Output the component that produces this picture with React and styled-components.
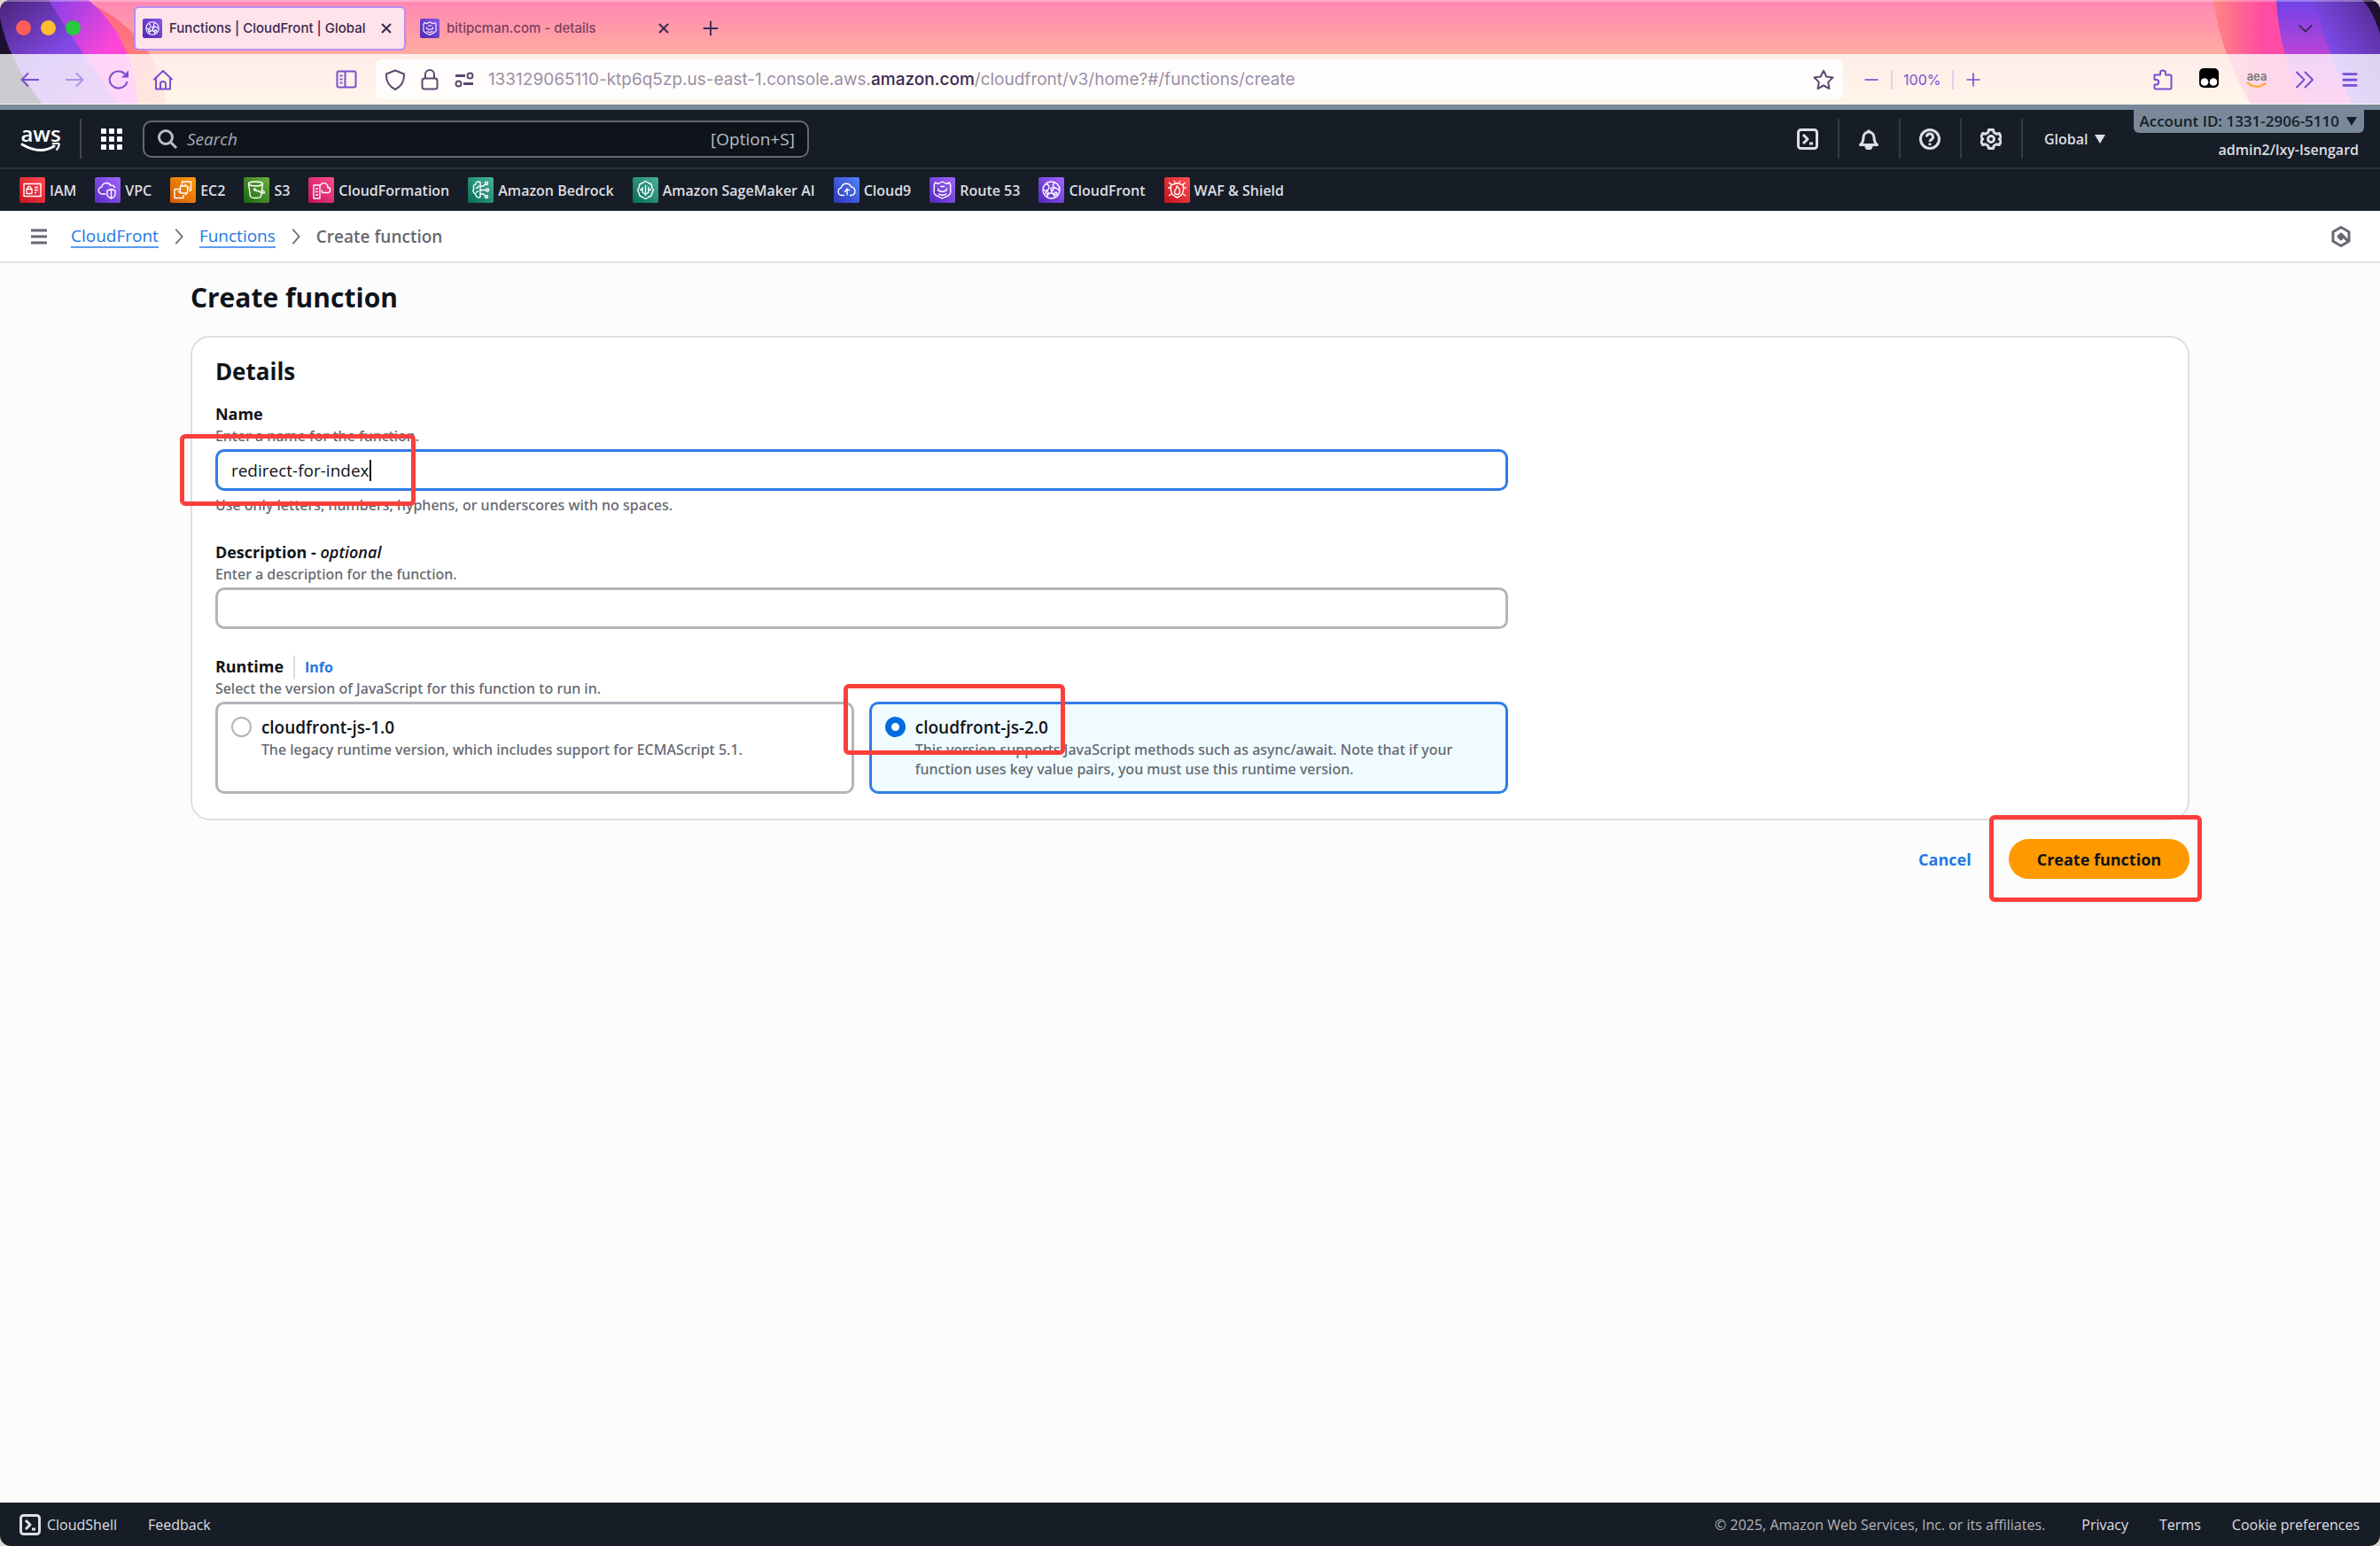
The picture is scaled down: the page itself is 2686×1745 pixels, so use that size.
import React, { useState } from "react";
import styled, { createGlobalStyle, css } from "styled-components";

const FAVORITES = [
  { name: "IAM", from: "#c9101f", to: "#ff4b55", icon: "iam" },
  { name: "VPC", from: "#5a2bc4", to: "#a166ff", icon: "vpc" },
  { name: "EC2", from: "#d35808", to: "#ff9d0a", icon: "ec2" },
  { name: "S3", from: "#1b660f", to: "#6cae3e", icon: "s3" },
  { name: "CloudFormation", from: "#c4105f", to: "#ff4f8b", icon: "formation" },
  { name: "Amazon Bedrock", from: "#066b59", to: "#4ab29a", icon: "bedrock" },
  { name: "Amazon SageMaker AI", from: "#066b59", to: "#4ab29a", icon: "sagemaker" },
  { name: "Cloud9", from: "#2e35bd", to: "#5282f8", icon: "cloud9" },
  { name: "Route 53", from: "#5226b8", to: "#a166ff", icon: "route53" },
  { name: "CloudFront", from: "#5226b8", to: "#a166ff", icon: "cloudfront" },
  { name: "WAF & Shield", from: "#c3101f", to: "#ff5252", icon: "waf" },
];

const SERVICE_PATHS = {
  iam: (
    <>
      <path d="M5 7.5h19v14H5z" />
      <path d="M8 13.5h6v5H8zM9.2 13.5v-1.3a1.8 1.8 0 0 1 3.6 0v1.3M17 11.5h4M17 14.5h4M17 17.5h2" />
    </>
  ),
  vpc: (
    <>
      <path d="M12.5 19H8.5a4 4 0 0 1-.6-8 5.2 5.2 0 0 1 9.8-1.6 3.6 3.6 0 0 1 5 3" />
      <path d="M18.5 13.5l4.5 1.6v4c0 2.5-2 4-4.5 5-2.5-1-4.5-2.5-4.5-5v-4zM18.5 13.5v10.5" />
    </>
  ),
  ec2: (
    <path d="M11.5 10h8v8h-8zM8.5 13.5H5v10h10V20M13.5 7.5V5h10v10H21M13.5 7.5V10M17 7.5V10M19.5 12H22M8.5 13.5h3M8.5 16.5h3M17.5 18v2.5" />
  ),
  s3: (
    <>
      <ellipse cx="13.5" cy="7.5" rx="8" ry="2.5" />
      <path d="M5.5 7.5l2 14c.5 1.3 3 2 6 2s5.5-.7 6-2l2-14M13 14.5l9 3.5c1.5.3 2-.8.8-2l-2-1.7" />
      <circle cx="12.5" cy="14" r="1" />
    </>
  ),
  formation: (
    <>
      <path d="M6 9h7v15H6zM8 13h3M8 16.5h3M8 20h3" />
      <path d="M15.5 17.5h6a3 3 0 0 0 .3-6 4.3 4.3 0 0 0-8.3-2M15.5 17.5v-3" />
    </>
  ),
  bedrock: (
    <>
      <path d="M14 5.5c-3-1.5-5 .5-5 2.5-2.5.3-3.5 3-2 5-2 1.8-1 5 1.5 5.5 0 3 3 5.5 5.5 4z" />
      <path d="M9 12.5c2 0 3-1 3-3M9 17c1.5 0 2.5-.7 3-2M14 10h3.5l2-2M14 14.5h6M14 19h3.5l2 2" />
      <circle cx="21" cy="7" r="1.5" />
      <circle cx="22" cy="14.5" r="1.5" />
      <circle cx="21" cy="22" r="1.5" />
    </>
  ),
  sagemaker: (
    <>
      <path d="M11 6.5l3.5-2 3.5 2 3 1.5 1 4 1.5 2.5-1.5 3-1 3.5-3 1.5-3.5 2-3.5-2-3-1.5-1-3.5-1.5-3 1.5-2.5 1-4z" />
      <path d="M14.5 9v12M11 11v6l3.5 2.5M18 11v6l-3.5 2.5M11 13.5l-3 1M18 13.5l3 1" />
    </>
  ),
  cloud9: (
    <path d="M12 20.5H9a4.3 4.3 0 0 1-.5-8.5 5.7 5.7 0 0 1 11-1 4.8 4.8 0 0 1 .5 9.5h-2M12 17l3-4v7.5M15 13l3 2" />
  ),
  route53: (
    <>
      <path d="M6.5 6l3.5 1.5L14.5 5 19 7.5 22.5 6 24 9.5c-1.5 3.500 1 5.500-.5 9-1.500 3-5.500 3.500-9 5.500-3.500-2-7.500-2.500-9-5.500-1.500-3.500 1-5.500-.5-9z" />
      <path d="M10 12.5V15l4.5 1.5L19 15v-2.5M10 19l4.5 1.5L19 19M12 10.5h5" />
    </>
  ),
  cloudfront: (
    <>
      <circle cx="14.5" cy="14.5" r="9.5" />
      <path d="M8.5 7.5c3 1 4 3 3 5.5s-5 2-6 1.5M18 6c-2.500 2-2 5 .5 6s4 1 5 3M10 22.500c0-3 1.500-4.500 4-4.500s4 1.500 4 4.500M14.500 18l1-3" />
      <circle cx="15.5" cy="13.5" r="1.5" />
      <circle cx="9.5" cy="17.5" r="1.5" />
      <circle cx="19.5" cy="18.5" r="1.5" />
    </>
  ),
  waf: (
    <>
      <path d="M14.5 6.5l7 2.5v6c0 4-3 6-7 8-4-2-7-4-7-8V9z" />
      <path d="M14.5 19.5a3 3 0 0 1-3-3c0-2.500 3-3 2.500-6.500 2.500 1.500 3.500 4 3.500 6.500a3 3 0 0 1-3 3zM5 6l3 2M24 6l-3 2M4 12h3M25 12h-3M5 21l3-2M24 21l-3-2M11 4l1 2M18 4l-1 2" />
    </>
  ),
};

const UI_PATHS = {
  close: <path d="M7 7l10 10M17 7L7 17" />,
  plus: <path d="M12 3v18M3 12h18" />,
  minus: <path d="M3 12h18" />,
  chevronDown: <path d="M4 8l8 8 8-8" />,
  back: <path d="M22 12H3M10 4.5L2.5 12l7.5 7.5" />,
  forward: <path d="M2 12h19M14 4.5l7.5 7.5-7.5 7.5" />,
  reload: (
    <>
      <path d="M21.5 14A10 9.5 0 1 1 19 5.5" />
      <path d="M23 1.5v8h-8z" fill="currentColor" stroke="none" />
    </>
  ),
  home: <path d="M1.5 12L12 2l10.5 10M4 10v12.5h16V10M9 22v-5a3 3 0 0 1 6 0v5" />,
  sidebar: (
    <>
      <rect x="1.5" y="2.5" width="21" height="18" rx="2" />
      <path d="M10.5 2.5v18M4.5 7.5h3M4.5 11.5h3M4.5 15.5h3" />
    </>
  ),
  shield: <path d="M12 1.5l10 4c.5 8-3 14-10 17.5C5 19.5 1.5 13.5 2 5.5z" />,
  lock: (
    <>
      <rect x="3.5" y="10.5" width="17" height="12" rx="2.5" />
      <path d="M7 10.5V6a5 5 0 0 1 10 0v4.5" />
    </>
  ),
  perms: (
    <>
      <path d="M2 7.5h11M11 16.5h11" strokeWidth="3" />
      <circle cx="18.5" cy="7.5" r="3" />
      <circle cx="5.5" cy="16.5" r="3" />
    </>
  ),
  star: <path d="M12 1.8l3.2 6.7 7.3 1-5.3 5.1 1.3 7.4-6.5-3.5L5.5 22l1.3-7.4-5.3-5.1 7.3-1z" />,
  puzzle: (
    <path d="M2.5 8.5v-2H9v-2a3 3 0 0 1 6 0v2h5A1.5 1.5 0 0 1 21.5 8v13a1.5 1.5 0 0 1-1.5 1.5H4A1.5 1.5 0 0 1 2.5 21v-3.5h2a2.7 2.7 0 0 0 0-5.4h-2z" />
  ),
  overflow: <path d="M2.5 3l9 9-9 9M12 3l9 9-9 9" />,
  menu: <path d="M3 5h18M3 12h18M3 19h18" />,
  search: (
    <>
      <circle cx="10" cy="10" r="7.5" />
      <path d="M15.5 15.5L22 22" />
    </>
  ),
  shell: (
    <>
      <rect x="1.5" y="1.5" width="21" height="21" rx="3" />
      <path d="M7 7l5 5-5 5M14 17h4" />
    </>
  ),
  bell: (
    <>
      <path d="M2.5 18.5C5 16.5 6 14.500 6 10a6 6 0 0 1 12 0c0 4.500 1 6.500 3.500 8.500z" />
      <path d="M9 20a3 3 0 0 0 6 0z" fill="currentColor" />
      <path d="M12 4V1.5" />
    </>
  ),
  help: (
    <>
      <circle cx="12" cy="12" r="10.5" />
      <path d="M8.5 9.5a3.5 3.5 0 1 1 5 3.2c-1 .5-1.5 1-1.5 2.3M12 16.5V19" />
    </>
  ),
  gear: (
    <>
      <path d="M9.5 1.5h5l.8 3 3 1.7 3-.8 2 4.2-2 2.4 2 2.4-2 4.2-3-.8-3 1.7-.8 3h-5l-.8-3-3-1.7-3 .8-2-4.2 2-2.4-2-2.4 2-4.2 3 .8 3-1.7z" />
      <circle cx="12" cy="12" r="3.5" />
    </>
  ),
  chevronRight: <path d="M8 3l8 9-8 9" />,
  assistant: (
    <>
      <path d="M12 1.5l9 5.2v10.6l-9 5.2-9-5.2V6.7z" />
      <path d="M12 9l3 3 4.5 5M12 9l-3 3 3 3 3-3z" fill="currentColor" />
    </>
  ),
};

function Icon({ name, size = 24, weight = 2 }) {
  return (
    <Svg
      viewBox="0 0 24 24"
      width={size}
      height={size}
      strokeWidth={weight}
      aria-hidden="true"
    >
      {UI_PATHS[name]}
    </Svg>
  );
}

function ServiceIcon({ icon, from, to, size = 29 }) {
  return (
    <ServiceTile $from={from} $to={to} $size={size}>
      <Svg viewBox="0 0 29 29" width={size} height={size} strokeWidth="1.4" aria-hidden="true">
        {SERVICE_PATHS[icon]}
      </Svg>
    </ServiceTile>
  );
}

function ThemeArt() {
  return (
    <>
      <ArtLeft viewBox="0 0 200 117" width="200" height="117" aria-hidden="true">
        <defs>
          <linearGradient id="l1" x1="0" y1="0" x2="1" y2="1">
            <stop offset="0" stopColor="#ff4f9d" />
            <stop offset="1" stopColor="#ff9068" />
          </linearGradient>
          <linearGradient id="l2" x1="0" y1="0" x2="1" y2="0.6">
            <stop offset="0.3" stopColor="#8b3fe8" />
            <stop offset="0.8" stopColor="#ff45d8" />
          </linearGradient>
          <linearGradient id="l3" x1="0" y1="0" x2="1" y2="1">
            <stop offset="0" stopColor="#4a2478" />
            <stop offset="0.5" stopColor="#8148e6" />
            <stop offset="1" stopColor="#b44be0" />
          </linearGradient>
        </defs>
        <path d="M0 0H95Q180 40 187 117H0z" fill="url(#l1)" />
        <path d="M0 0H100Q152 45 155 117H0z" fill="url(#l2)" />
        <path d="M0 0H55Q82 45 133 117H0z" fill="url(#l3)" />
        <path d="M0 20Q8 65 47 117H0z" fill="#1c0f30" />
      </ArtLeft>
      <ArtRight viewBox="0 0 220 117" width="220" height="117" aria-hidden="true">
        <defs>
          <linearGradient id="r1" x1="0" y1="0" x2="1" y2="0">
            <stop offset="0" stopColor="#ff8580" />
            <stop offset="0.3" stopColor="#ff4ba3" />
          </linearGradient>
          <linearGradient id="r2" x1="0" y1="0" x2="0" y2="1">
            <stop offset="0" stopColor="#6f42e8" />
            <stop offset="1" stopColor="#ff45c8" />
          </linearGradient>
          <linearGradient id="r3" x1="1" y1="0" x2="0" y2="1">
            <stop offset="0" stopColor="#50288c" />
            <stop offset="0.6" stopColor="#7d4ae6" />
            <stop offset="1" stopColor="#9a55ea" />
          </linearGradient>
        </defs>
        <path d="M32 0Q40 60 74 117H220V0z" fill="url(#r1)" />
        <path d="M103 0Q106 60 134 117H220V0z" fill="url(#r2)" />
        <path d="M144 0Q158 50 188 117H220V0z" fill="url(#r3)" />
        <path d="M200 0Q212 12 220 38V0z" fill="#1c0f30" />
      </ArtRight>
    </>
  );
}

function Browser() {
  return (
    <Chrome>
      <ThemeArt />
      <TabStrip>
        <Lights>
          <Light $color="#ff5f57" />
          <Light $color="#febc2e" />
          <Light $color="#28c840" />
        </Lights>
        <Tab $active>
          <ServiceIcon icon="cloudfront" from="#4d27b0" to="#8a55e8" size={22} />
          <span>Functions | CloudFront | Global</span>
          <TabButton aria-label="Close tab">
            <Icon name="close" />
          </TabButton>
        </Tab>
        <Tab>
          <ServiceIcon icon="route53" from="#4d27b0" to="#8a55e8" size={22} />
          <span>bitipcman.com - details</span>
          <TabButton aria-label="Close tab">
            <Icon name="close" />
          </TabButton>
        </Tab>
        <NewTab aria-label="New tab">
          <Icon name="plus" size={22} />
        </NewTab>
        <TabButton aria-label="List all tabs">
          <Icon name="chevronDown" size={22} />
        </TabButton>
      </TabStrip>
      <Toolbar>
        <ToolGroup>
          <ToolButton aria-label="Back">
            <Icon name="back" />
          </ToolButton>
          <ToolButton aria-label="Forward" $faded>
            <Icon name="forward" />
          </ToolButton>
          <ToolButton aria-label="Reload">
            <Icon name="reload" />
          </ToolButton>
          <ToolButton aria-label="Home">
            <Icon name="home" />
          </ToolButton>
        </ToolGroup>
        <FlexSpace $grow={19} />
        <ToolButton aria-label="Sidebar">
          <Icon name="sidebar" />
        </ToolButton>
        <UrlBar>
          <Icon name="shield" />
          <Icon name="lock" />
          <Icon name="perms" />
          <Url>
            133129065110-ktp6q5zp.us-east-1.console.aws.<b>amazon.com</b>
            /cloudfront/v3/home?#/functions/create
          </Url>
          <Icon name="star" />
        </UrlBar>
        <Zoom>
          <ToolButton aria-label="Zoom out">
            <Icon name="minus" size={20} />
          </ToolButton>
          <ZoomLevel>100%</ZoomLevel>
          <ToolButton aria-label="Zoom in">
            <Icon name="plus" size={20} />
          </ToolButton>
        </Zoom>
        <FlexSpace $grow={20} />
        <Extensions>
          <ToolButton aria-label="Extensions">
            <Icon name="puzzle" />
          </ToolButton>
          <ToolButton aria-label="Tampermonkey">
            <svg viewBox="0 0 24 24" width="24" height="24">
              <rect x="1" y="1" width="22" height="22" rx="5" fill="#000" />
              <circle cx="7" cy="16.5" r="4.3" fill="#fff" />
              <circle cx="17" cy="16.5" r="4.3" fill="#fff" />
            </svg>
          </ToolButton>
          <AeaButton aria-label="aea">
            aea
            <svg viewBox="0 0 24 8" width="24" height="8">
              <path d="M1 1q10 9 21 1" fill="none" stroke="#ffae42" strokeWidth="2.5" />
            </svg>
          </AeaButton>
          <ToolButton aria-label="More tools">
            <Icon name="overflow" />
          </ToolButton>
          <ToolButton aria-label="Menu">
            <Icon name="menu" size={22} weight={3} />
          </ToolButton>
        </Extensions>
      </Toolbar>
    </Chrome>
  );
}

function ConsoleHeader() {
  return (
    <Header>
      <NavRow>
        <AwsLogo href="#home" aria-label="AWS Console Home">
          aws
          <svg viewBox="0 0 46 12" width="46" height="12">
            <path d="M2 2q20 12 36 2" fill="none" stroke="#fff" strokeWidth="3" strokeLinecap="round" />
            <path d="M36 1.5c4-1.5 7-1 7.5 0s-.5 4.5-3 7" fill="none" stroke="#fff" strokeWidth="2.2" />
          </svg>
        </AwsLogo>
        <Divider />
        <IconButton aria-label="Services">
          <svg viewBox="0 0 24 24" width="24" height="24" fill="#fff">
            {[0, 9, 18].map((y) =>
              [0, 9, 18].map((x) => (
                <rect key={`${x}-${y}`} x={x} y={y} width="6" height="6" rx="1" />
              ))
            )}
          </svg>
        </IconButton>
        <SearchBox>
          <Icon name="search" weight={3} />
          <input type="search" placeholder="Search" aria-label="Search" />
          <span>[Option+S]</span>
        </SearchBox>
        <NavActions>
          <NavAction aria-label="CloudShell">
            <Icon name="shell" weight={3} />
          </NavAction>
          <NavAction aria-label="Notifications">
            <Icon name="bell" weight={3} />
          </NavAction>
          <NavAction aria-label="Help">
            <Icon name="help" weight={3} />
          </NavAction>
          <NavAction aria-label="Settings">
            <Icon name="gear" weight={3} />
          </NavAction>
        </NavActions>
        <Region>
          Global <Triangle />
        </Region>
        <Account>
          <AccountId>
            Account ID: 1331-2906-5110 <Triangle />
          </AccountId>
          <UserName>admin2/lxy-Isengard</UserName>
        </Account>
      </NavRow>
      <FavoritesBar>
        {FAVORITES.map(({ name, ...icon }) => (
          <Favorite key={name} href="#service">
            <ServiceIcon {...icon} />
            {name}
          </Favorite>
        ))}
      </FavoritesBar>
    </Header>
  );
}

function Triangle() {
  return (
    <svg viewBox="0 0 12 10" width="12" height="10" aria-hidden="true">
      <path d="M0 0h12L6 10z" fill="currentColor" />
    </svg>
  );
}

function CreateFunction() {
  const [name, setName] = useState("redirect-for-index");
  const [description, setDescription] = useState("");
  const [runtime, setRuntime] = useState("2.0");

  return (
    <Main>
      <PageTitle>Create function</PageTitle>
      <form onSubmit={(e) => e.preventDefault()}>
        <Card>
          <CardTitle>Details</CardTitle>
          <FormGrid>
            <Fields>
              <Field>
                <FieldLabel htmlFor="fn-name">Name</FieldLabel>
                <Hint>Enter a name for the function.</Hint>
                <FocusedBox>
                  <input
                    id="fn-name"
                    value={name}
                    onChange={(e) => setName(e.target.value)}
                  />
                  <Caret />
                  <Highlight $inset="-20px auto -20px -43px" $width="266px" />
                </FocusedBox>
                <Hint>Use only letters, numbers, hyphens, or underscores with no spaces.</Hint>
              </Field>
              <Field>
                <FieldLabel htmlFor="fn-description">
                  Description - <i>optional</i>
                </FieldLabel>
                <Hint>Enter a description for the function.</Hint>
                <TextInput
                  id="fn-description"
                  value={description}
                  onChange={(e) => setDescription(e.target.value)}
                />
              </Field>
              <Field role="radiogroup" aria-labelledby="runtime-label">
                <LabelRow>
                  <FieldLabel as="span" id="runtime-label">
                    Runtime
                  </FieldLabel>
                  <InfoLink href="#info">Info</InfoLink>
                </LabelRow>
                <Hint>Select the version of JavaScript for this function to run in.</Hint>
                <Tiles>
                  <Tile $checked={runtime === "1.0"}>
                    <input
                      type="radio"
                      name="runtime"
                      checked={runtime === "1.0"}
                      onChange={() => setRuntime("1.0")}
                    />
                    <TileText>
                      <strong>cloudfront-js-1.0</strong>
                      <Hint as="span">
                        The legacy runtime version, which includes support for ECMAScript 5.1.
                      </Hint>
                    </TileText>
                  </Tile>
                  <Tile $checked={runtime === "2.0"}>
                    <input
                      type="radio"
                      name="runtime"
                      checked={runtime === "2.0"}
                      onChange={() => setRuntime("2.0")}
                    />
                    <TileText>
                      <strong>cloudfront-js-2.0</strong>
                      <Hint as="span">
                        This version supports JavaScript methods such as async/await. Note that if
                        your function uses key value pairs, you must use this runtime version.
                      </Hint>
                    </TileText>
                    <Highlight $inset="-23px auto 41px -32px" $width="250px" />
                  </Tile>
                </Tiles>
              </Field>
            </Fields>
          </FormGrid>
        </Card>
        <Actions>
          <LinkButton type="button">Cancel</LinkButton>
          <SubmitWrap>
            <PrimaryButton type="submit">Create function</PrimaryButton>
            <Highlight $inset="-27px -14px -26px -22px" />
          </SubmitWrap>
        </Actions>
      </form>
    </Main>
  );
}

function App() {
  return (
    <Page>
      <GlobalStyle />
      <Browser />
      <ConsoleHeader />
      <BreadcrumbBar aria-label="Breadcrumbs">
        <IconButton aria-label="Open navigation">
          <Icon name="menu" weight={3} />
        </IconButton>
        <Crumb href="#cloudfront">CloudFront</Crumb>
        <Icon name="chevronRight" size={22} />
        <Crumb href="#functions">Functions</Crumb>
        <Icon name="chevronRight" size={22} />
        <CurrentCrumb>Create function</CurrentCrumb>
        <IconButton aria-label="Assistant" $end>
          <Icon name="assistant" weight={3} />
        </IconButton>
      </BreadcrumbBar>
      <CreateFunction />
      <Footer>
        <FooterShell>
          <Icon name="shell" weight={3} /> CloudShell
        </FooterShell>
        <FooterLink href="#feedback">Feedback</FooterLink>
        <Copyright>© 2025, Amazon Web Services, Inc. or its affiliates.</Copyright>
        <FooterLink href="#privacy">Privacy</FooterLink>
        <FooterLink href="#terms">Terms</FooterLink>
        <FooterLink href="#cookies">Cookie preferences</FooterLink>
      </Footer>
    </Page>
  );
}

export default App;

const GlobalStyle = createGlobalStyle`
  * {
    box-sizing: border-box;
  }
  body {
    margin: 0;
    background-color: #d9d7cf;
    color: #0f141a;
    font-family: "Open Sans", "Noto Sans", sans-serif;
    font-size: 16px;
  }
  button, input {
    font: inherit;
    color: inherit;
  }
  button {
    border: 0;
    padding: 0;
    background: none;
  }
  h1, h2, p {
    margin: 0;
  }
`;

const Page = styled.div`
  display: flex;
  flex-direction: column;
  min-height: 100vh;
  border-radius: 12px;
  overflow: hidden;
  background-color: #fcfcfd;
`;
const Svg = styled.svg`
  display: block;
  flex: none;
  fill: none;
  stroke: currentColor;
  stroke-linejoin: round;
`;
const ServiceTile = styled.span`
  flex: none;
  width: ${(p) => p.$size}px;
  height: ${(p) => p.$size}px;
  border-radius: 2px;
  color: #fff;
  background: linear-gradient(45deg, ${(p) => p.$from}, ${(p) => p.$to});
`;

/* browser frame */
const Chrome = styled.div`
  position: relative;
  background: linear-gradient(#ff87b3, #ffaba0 61px, #ffd0a0);
  font-family: Inter, sans-serif;
  color: #3a2850;
`;
const art = css`
  position: absolute;
  top: 0;
`;
const ArtLeft = styled.svg`
  ${art}
  left: 0;
`;
const ArtRight = styled.svg`
  ${art}
  right: 0;
`;
const TabStrip = styled.div`
  position: relative;
  display: flex;
  align-items: center;
  height: 61px;
  padding: 0 73px 0 18px;
  border-top: 2px solid rgba(255, 255, 255, 0.3);
`;
const Lights = styled.div`
  display: flex;
  flex: none;
  gap: 11px;
  width: 133px;
`;
const Light = styled.span`
  width: 17px;
  height: 17px;
  border-radius: 50%;
  background-color: ${(p) => p.$color};
`;
const Tab = styled.div`
  display: flex;
  align-items: center;
  gap: 8px;
  width: 307px;
  height: 50px;
  padding: 0 8px;
  border: 2px solid transparent;
  border-radius: 6px;
  font-size: 15px;
  font-weight: 500;
  color: #7d3f62;
  span {
    white-space: nowrap;
  }
  ${(p) =>
    p.$active &&
    css`
      border-color: #b98cf0;
      background-color: #ffe3ea;
      color: #3a2850;
    `}
  & + & {
    margin-left: 6px;
  }
`;
const TabButton = styled.button`
  color: #3a2850;
  margin-left: auto;
`;
const NewTab = styled(TabButton)`
  margin-left: 20px;
`;
const Toolbar = styled.div`
  position: relative;
  display: flex;
  align-items: center;
  height: 57px;
  padding: 0 23px 0 22px;
  background-color: rgba(255, 255, 255, 0.78);
  color: #7a4fd0;
`;
const ToolGroup = styled.div`
  display: flex;
  gap: 26px;
`;
const ToolButton = styled.button`
  opacity: ${(p) => (p.$faded ? 0.5 : 1)};
`;
const FlexSpace = styled.div`
  flex: ${(p) => p.$grow};
`;
const UrlBar = styled.div`
  flex: 170;
  display: flex;
  align-items: center;
  gap: 15px;
  height: 45px;
  margin-left: 21px;
  padding: 0 10px;
  border-radius: 6px;
  background-color: #fffdfb;
  color: #5b4a6e;
`;
const Url = styled.div`
  flex: 1;
  font-size: 19px;
  color: #9a90a8;
  white-space: nowrap;
  b {
    font-weight: 500;
    color: #3a2850;
  }
`;
const Zoom = styled.div`
  display: flex;
  align-items: center;
  gap: 12px;
  margin-left: 22px;
`;
const ZoomLevel = styled.span`
  padding: 0 12px;
  border: solid #e3cfe6;
  border-width: 0 2px;
  font-size: 16px;
  line-height: 22px;
`;
const Extensions = styled.div`
  display: flex;
  align-items: center;
  gap: 28px;
`;
const AeaButton = styled.button`
  display: grid;
  justify-items: center;
  width: 28px;
  font-size: 13px;
  font-weight: 600;
  line-height: 12px;
  color: #777;
`;

/* console header */
const Header = styled.header`
  border-top: 6px solid #7a899a;
  background-color: #161d26;
  color: #dedee3;
`;
const NavRow = styled.div`
  display: flex;
  align-items: center;
  height: 67px;
  padding: 0 18px 0 22px;
  border-bottom: 2px solid #2c333d;
`;
const AwsLogo = styled.a`
  display: grid;
  justify-items: center;
  width: 48px;
  font-size: 24px;
  font-weight: 600;
  line-height: 20px;
  color: #fff;
  text-decoration: none;
`;
const Divider = styled.span`
  width: 2px;
  height: 45px;
  margin: 0 22px 0 20px;
  background-color: #424650;
`;
const IconButton = styled.button`
  display: flex;
  ${(p) => p.$end && "margin-left: auto;"}
`;
const SearchBox = styled.label`
  display: flex;
  align-items: center;
  gap: 10px;
  width: calc(28% + 11px);
  height: 42px;
  margin-left: 23px;
  padding: 0 14px;
  border: 2px solid #656871;
  border-radius: 10px;
  background-color: #0f141a;
  font-size: 19px;
  color: #b6bec9;
  input {
    flex: 1;
    min-width: 0;
    border: 0;
    padding: 0;
    outline: none;
    background: none;
  }
  input::placeholder {
    color: #a4acb6;
    font-style: italic;
  }
`;
const NavActions = styled.div`
  display: flex;
  margin-left: auto;
`;
const NavAction = styled.button`
  display: grid;
  place-items: center;
  width: 69px;
  height: 45px;
  border-right: 2px solid #333a44;
`;
const Region = styled.button`
  display: flex;
  align-items: center;
  gap: 8px;
  margin: 0 32px 0 24px;
  font-size: 16px;
  font-weight: 600;
`;
const Account = styled.div`
  align-self: stretch;
  display: flex;
  flex-direction: column;
  align-items: flex-end;
  gap: 8px;
`;
const AccountId = styled.button`
  display: flex;
  align-items: center;
  gap: 8px;
  height: 26px;
  padding: 0 8px 0 6px;
  border-radius: 0 0 6px 6px;
  background-color: #7a899a;
  font-size: 17px;
  font-weight: 600;
  line-height: 24px;
  color: #161d26;
`;
const UserName = styled.span`
  padding-right: 6px;
  font-size: 16px;
  font-weight: 600;
  line-height: 22px;
`;
const FavoritesBar = styled.nav`
  display: flex;
  align-items: center;
  gap: 21px;
  height: 47px;
  padding: 0 22px;
`;
const Favorite = styled.a`
  display: flex;
  align-items: center;
  gap: 5px;
  font-size: 16px;
  font-weight: 600;
  color: inherit;
  text-decoration: none;
`;

/* breadcrumbs */
const BreadcrumbBar = styled.nav`
  display: flex;
  align-items: center;
  gap: 12px;
  height: 59px;
  padding: 0 32px;
  border-bottom: 2px solid #e3e3e8;
  background-color: #fff;
  font-size: 19px;
  color: #656871;
`;
const Crumb = styled.a`
  color: #2278e4;
  text-decoration: none;
  border-bottom: 2px solid #5b9cf0;
  line-height: 24px;
  ${IconButton} + & {
    margin-left: 12px;
  }
`;
const CurrentCrumb = styled.span`
  font-weight: 600;
`;

/* form */
const Main = styled.main`
  flex: 1;
  padding: 19px 8%;
`;
const PageTitle = styled.h1`
  margin-bottom: 23px;
  font-size: 30px;
  line-height: 40px;
`;
const Card = styled.section`
  padding: 21px 26px 28px;
  border: 2px solid #dedee3;
  border-radius: 22px;
  background-color: #fff;
`;
const CardTitle = styled.h2`
  margin-bottom: 19px;
  font-size: 26px;
  line-height: 34px;
`;
const FormGrid = styled.div`
  display: grid;
  grid-template-columns: 2fr 1fr;
  gap: 12px;
`;
const Fields = styled.div`
  display: grid;
  gap: 30px;
`;
const Field = styled.div`
  display: flex;
  flex-direction: column;
`;
const FieldLabel = styled.label`
  margin-bottom: 2px;
  font-size: 18px;
  font-weight: 700;
  line-height: 24px;
  i {
    font-weight: 600;
  }
`;
const Hint = styled.p`
  font-family: "Noto Sans", "Open Sans", sans-serif;
  font-size: 16px;
  font-weight: 500;
  line-height: 22px;
  color: #656871;
`;
const control = css`
  height: 47px;
  border: 3px solid #b4b4bb;
  border-radius: 10px;
  background-color: #fff;
  font-size: 19px;
`;
const TextInput = styled.input`
  ${control}
  margin-top: 4px;
  padding: 0 15px;
`;
const FocusedBox = styled.div`
  ${control}
  position: relative;
  display: flex;
  align-items: center;
  margin: 4px 0 5px;
  padding: 0 15px;
  border-color: #2f7de6;
  input {
    field-sizing: content;
    border: 0;
    padding: 0;
    outline: none;
    background: none;
  }
`;
const Caret = styled.span`
  width: 2px;
  height: 24px;
  background-color: #0f141a;
`;
const Highlight = styled.span`
  position: absolute;
  inset: ${(p) => p.$inset};
  width: ${(p) => p.$width || "auto"};
  border: 5px solid #fb3f3b;
  border-radius: 6px;
  pointer-events: none;
`;
const LabelRow = styled.div`
  display: flex;
`;
const InfoLink = styled.a`
  margin-left: 11px;
  padding-left: 11px;
  border-left: 2px solid #dedee3;
  font-size: 16px;
  font-weight: 700;
  line-height: 26px;
  color: #2278e4;
  text-decoration: none;
`;
const Tiles = styled.div`
  display: grid;
  grid-template-columns: 1fr 1fr;
  gap: 17px;
  margin-top: 4px;
`;
const Tile = styled.label`
  position: relative;
  display: flex;
  gap: 11px;
  padding: 14px 15px;
  border: 3px solid ${(p) => (p.$checked ? "#2f7de6" : "#b4b4bb")};
  border-radius: 10px;
  background-color: ${(p) => (p.$checked ? "#f0fbff" : "#fff")};
  input {
    appearance: none;
    flex: none;
    width: 23px;
    height: 23px;
    margin: 0;
    border: ${(p) => (p.$checked ? "7px solid #006ce0" : "2px solid #b4b4bb")};
    border-radius: 50%;
    background-color: #fff;
  }
`;
const TileText = styled.span`
  display: grid;
  align-content: start;
  gap: 2px;
  strong {
    font-size: 19px;
    font-weight: 600;
    line-height: 24px;
  }
`;
const Actions = styled.div`
  display: flex;
  justify-content: flex-end;
  align-items: center;
  gap: 42px;
  margin-top: 21px;
`;
const LinkButton = styled.button`
  font-size: 18px;
  font-weight: 700;
  color: #2278e4;
`;
const SubmitWrap = styled.div`
  position: relative;
`;
const PrimaryButton = styled.button`
  height: 45px;
  padding: 0 32px;
  border-radius: 23px;
  background-color: #ff9900;
  font-size: 18px;
  font-weight: 700;
`;

/* footer */
const Footer = styled.footer`
  display: flex;
  align-items: center;
  gap: 35px;
  height: 49px;
  padding: 0 23px 0 22px;
  background-color: #161d26;
  color: #dedee3;
  font-size: 16px;
  font-weight: 500;
`;
const FooterShell = styled.button`
  display: flex;
  align-items: center;
  gap: 7px;
`;
const FooterLink = styled.a`
  color: inherit;
  text-decoration: none;
`;
const Copyright = styled.span`
  margin: 0 6px 0 auto;
  color: #b4b4bb;
`;
